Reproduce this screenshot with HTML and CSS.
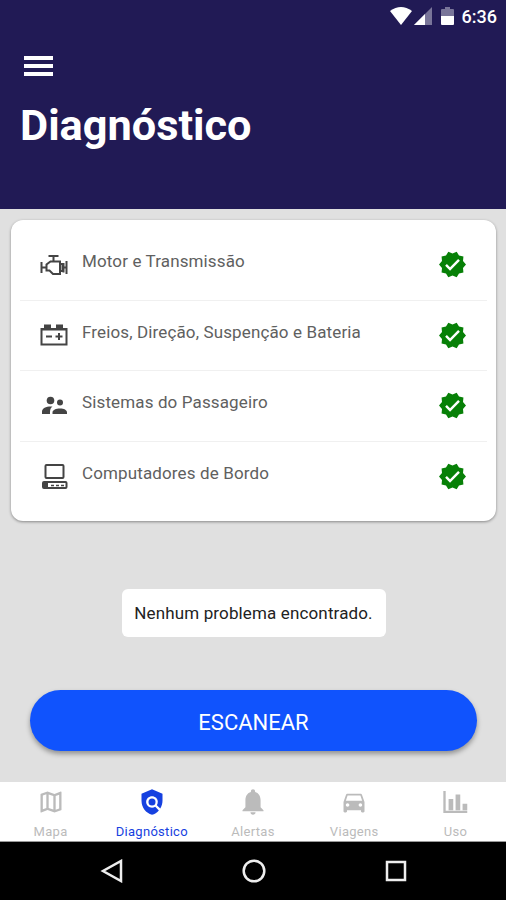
FILE: index.html
```html
<!DOCTYPE html>
<html lang="pt-BR">
<head>
  <meta charset="UTF-8" />
  <meta name="viewport" content="width=device-width, initial-scale=1.0"/>
  <title>Diagnóstico</title>
  <link rel="stylesheet" href="styles.css">
</head>
<body>

  <svg class="defs" width="0" height="0">
    <symbol id="verified" viewBox="1 1 22 22">
      <path d="M23 12L20.560 9.220L20.900 5.540L17.290 4.720L15.400 1.540L12 3L8.600 1.540L6.710 4.720L3.100 5.530L3.440 9.210L1 12L3.440 14.780L3.100 18.470L6.710 19.290L8.600 22.470L12 21L15.400 22.460L17.290 19.280L20.900 18.460L20.560 14.780L23 12M10 17L6 13L7.410 11.590L10 14.170L16.590 7.580L18 9L10 17Z"/>
    </symbol>
  </svg>

  <header class="header">
    <div class="status-bar">
      <svg class="wifi" width="22" height="18" viewBox="0 0 22 18"><path d="M0 4Q11-4 22 4L11 18z"/></svg>
      <svg class="signal" width="18" height="18" viewBox="0 0 18 18"><path d="M0 18L18 0V18z" opacity=".4"/><path d="M0 18L11 7V18z"/></svg>
      <svg class="battery" width="13" height="18" viewBox="0 0 13 18"><path d="M4 0h5v2h3q1 0 1 1v6H0V3q0-1 1-1h3z" opacity=".4"/><path d="M0 9h13v8q0 1-1 1H1q-1 0-1-1z"/></svg>
      <span class="time">6:36</span>
    </div>
    <div class="menu"><span></span><span></span><span></span></div>
    <h1>Diagnóstico</h1>
  </header>

  <main class="content">
    <ul class="card">
      <li>
        <svg class="item-icon" viewBox="0 0 28 28" fill="none" stroke="#444" stroke-width="2">
          <path d="M8.500 5h10M13.500 5v5M1.500 11v11M1.500 16.500h5M6.500 19.500v-6l4-3H20v12.500h-7l-3.500-3.500zM20 13h2.500v7H20M26.500 10v13M23.500 12v9.500M22.500 16.500h4" />
        </svg>
        <span class="label">Motor e Transmissão</span>
        <svg class="check"><use href="#verified"/></svg>
      </li>
      <li>
        <svg class="item-icon" viewBox="0 0 28 28" fill="#444">
          <path d="M4 3.500h7v3.500h5V3.500h7v3.500h4.500v17.500H.5V7H4zM2.500 9.500v13h23v-13z" fill-rule="evenodd"/>
          <path d="M6 14.500h6v2H6zM15.500 14.500h2.500V12h2v2.500h2.500v2H20V19h-2v-2.500h-2.500z"/>
        </svg>
        <span class="label">Freios, Direção, Suspenção e Bateria</span>
        <svg class="check"><use href="#verified"/></svg>
      </li>
      <li>
        <svg class="item-icon" viewBox="0 0 28 28" fill="#444">
          <circle cx="10.500" cy="8.500" r="3.800"/>
          <circle cx="20" cy="10.500" r="3"/>
          <path d="M2 22v-2.500c0-3.500 5-5.500 10.500-5-2 1.500-2.500 3-2.500 7.500zM12.500 22v-1.500c0-2.500 3.500-4 7.500-4s7 1.500 7 4V22z"/>
        </svg>
        <span class="label">Sistemas do Passageiro</span>
        <svg class="check"><use href="#verified"/></svg>
      </li>
      <li>
        <svg class="item-icon" viewBox="0 0 28 28" fill="none" stroke="#444" stroke-width="2">
          <rect x="5.500" y="2" width="18" height="13" rx="1"/>
          <rect x="3" y="19" width="23.500" height="6" rx="1"/>
          <path d="M3 22h5" stroke-width="6"/>
          <path d="M11 22.500h3M16 22.500h3M21 22.500h3" stroke-width="1.500"/>
        </svg>
        <span class="label">Computadores de Bordo</span>
        <svg class="check"><use href="#verified"/></svg>
      </li>
    </ul>

    <p class="message">Nenhum problema encontrado.</p>

    <button class="scan">ESCANEAR</button>
  </main>

  <nav class="tabs">
    <a class="tab">
      <svg viewBox="0 0 24 24"><path d="M20.500 3l-.16.030L15 5.100 9 3 3.360 4.900c-.21.070-.36.250-.36.480V20.500c0 .28.220.5.500.5l.16-.03L9 18.900l6 2.100 5.640-1.900c.21-.07.360-.25.360-.48V3.500c0-.28-.22-.5-.5-.5zM10 5.470l4 1.400v11.660l-4-1.400V5.470zM5 6.460l3-1.010v11.700l-3 1.160V6.460zM19 17.540l-3 1.010V6.860l3-1.160v11.840z"/></svg>
      <span>Mapa</span>
    </a>
    <a class="tab active">
      <svg viewBox="0 0 24 24"><path d="M21 5l-9-4-9 4v6c0 5.550 3.840 10.740 9 12 2.300-.56 4.330-1.900 5.880-3.710l-3.120-3.120c-1.940 1.290-4.580 1.070-6.290-.64-1.950-1.950-1.950-5.120 0-7.070 1.950-1.950 5.120-1.950 7.070 0 1.710 1.710 1.920 4.350.64 6.290l2.900 2.900C20.290 15.690 21 13.380 21 11V5z"/><circle cx="12" cy="12" r="3"/></svg>
      <span>Diagnóstico</span>
    </a>
    <a class="tab">
      <svg viewBox="0 0 24 24"><path d="M12 23c1.200 0 2.200-1 2.200-2.200H9.800C9.800 22 10.800 23 12 23zM18.500 16.500V10.500c0-3.500-1.700-6.300-4.700-7.100V2.800C13.800 1.800 13 1 12 1s-1.800.8-1.800 1.800v.6C7.200 4.200 5.500 7 5.500 10.500v6L3 19v1h18v-1z"/></svg>
      <span>Alertas</span>
    </a>
    <a class="tab">
      <svg viewBox="0 0 24 24"><path d="M18.920 6.010C18.720 5.420 18.160 5 17.500 5h-11c-.66 0-1.210.42-1.420 1.010L3 12v8c0 .55.450 1 1 1h1c.55 0 1-.45 1-1v-1h12v1c0 .55.450 1 1 1h1c.55 0 1-.45 1-1v-8l-2.080-5.990zM6.500 16c-.83 0-1.500-.67-1.500-1.500S5.670 13 6.500 13s1.500.67 1.500 1.500S7.330 16 6.500 16zm11 0c-.83 0-1.500-.67-1.500-1.500s.67-1.500 1.500-1.500 1.500.67 1.500 1.500-.67 1.500-1.500 1.500zM5 11l1.500-4.500h11L19 11H5z"/></svg>
      <span>Viagens</span>
    </a>
    <a class="tab">
      <svg viewBox="0 0 24 24"><path d="M2 2.500h2v17h18.500v2H2zM6.500 9.500h4V19h-4zM12.500 5.500h4V19h-4zM18.500 13.500h4V19h-4z"/></svg>
      <span>Uso</span>
    </a>
  </nav>

  <footer class="android-nav">
    <svg viewBox="0 0 24 24"><path d="M21 2v20L3 12z"/></svg>
    <svg viewBox="0 0 24 24"><circle cx="12" cy="12" r="10.300"/></svg>
    <svg viewBox="0 0 24 24"><rect x="3" y="3" width="18" height="18"/></svg>
  </footer>

</body>
</html>
```
FILE: styles.css
```css
* {
  box-sizing: border-box;
}

body {
  margin: 0;
  height: 900px;
  display: flex;
  flex-direction: column;
  font-family: Roboto, sans-serif;
  background-color: #e0e0e0;
  overflow: hidden;
}

.defs {
  position: absolute;
}

.header {
  height: 209px;
  background-color: #211a55;
  color: white;
}

.status-bar {
  display: flex;
  justify-content: flex-end;
  align-items: center;
  height: 32px;
  padding-right: 9px;
  fill: white;
}

.signal {
  margin-left: 2px;
}

.battery {
  margin-left: 9px;
}

.time {
  margin-left: 8px;
  font-size: 18px;
  font-weight: 500;
}

.menu {
  display: flex;
  flex-direction: column;
  gap: 4px;
  margin: 24px 0 0 24px;
  width: 29px;
}

.menu span {
  height: 4px;
  background-color: white;
}

h1 {
  margin: 24px 0 0 20px;
  font-size: 43.3px;
  line-height: 52px;
  font-weight: 700;
}

.content {
  flex: 1;
  display: flex;
  flex-direction: column;
  align-items: center;
  padding: 11px 10px 0 11px;
}

.card {
  width: 100%;
  height: 301px;
  margin: 0;
  padding: 10px 9px 9px;
  list-style: none;
  background-color: white;
  border-radius: 12px;
  box-shadow: 0 1px 3px rgba(0, 0, 0, 0.4);
}

.card li {
  display: flex;
  align-items: center;
  height: 70.5px;
  padding: 0 21px 0 20px;
  border-bottom: 1px solid #f0f0f0;
}

.card li:last-child {
  border-bottom: none;
}

.item-icon {
  width: 28px;
  height: 28px;
}

.label {
  flex: 1;
  margin-left: 14px;
  padding-bottom: 7px;
  font-size: 17px;
  letter-spacing: 0.13px;
  color: #606060;
}

.check {
  width: 27px;
  height: 27px;
  fill: #078007;
}

.message {
  margin: 68px 0 0;
  width: 264px;
  height: 48px;
  line-height: 49px;
  text-align: center;
  font-size: 17px;
  letter-spacing: 0.14px;
  color: #222;
  background-color: white;
  border-radius: 6px;
}

.scan {
  width: 447px;
  height: 61px;
  margin-top: 53px;
  padding: 3px 0 0;
  border: none;
  border-radius: 31px;
  background-color: #1053fd;
  box-shadow: 0 3px 5px rgba(0, 0, 0, 0.35);
  color: white;
  font-family: inherit;
  font-size: 22px;
}

.tabs {
  display: flex;
  height: 60px;
  background-color: white;
  border-bottom: 1px solid #999;
}

.tab {
  flex: 1;
  display: flex;
  flex-direction: column;
  align-items: center;
  padding-top: 6px;
  font-size: 13px;
  letter-spacing: 0.3px;
  color: #bbb;
}

.tab svg {
  width: 28px;
  height: 28px;
  margin-bottom: 8px;
  fill: currentColor;
}

.tab.active {
  color: #1641e0;
}

.android-nav {
  display: flex;
  justify-content: center;
  align-items: center;
  gap: 118px;
  height: 58px;
  padding-left: 2px;
  background-color: black;
}

.android-nav svg {
  width: 24px;
  height: 24px;
  fill: none;
  stroke: #eee;
  stroke-width: 2.5;
}
```
